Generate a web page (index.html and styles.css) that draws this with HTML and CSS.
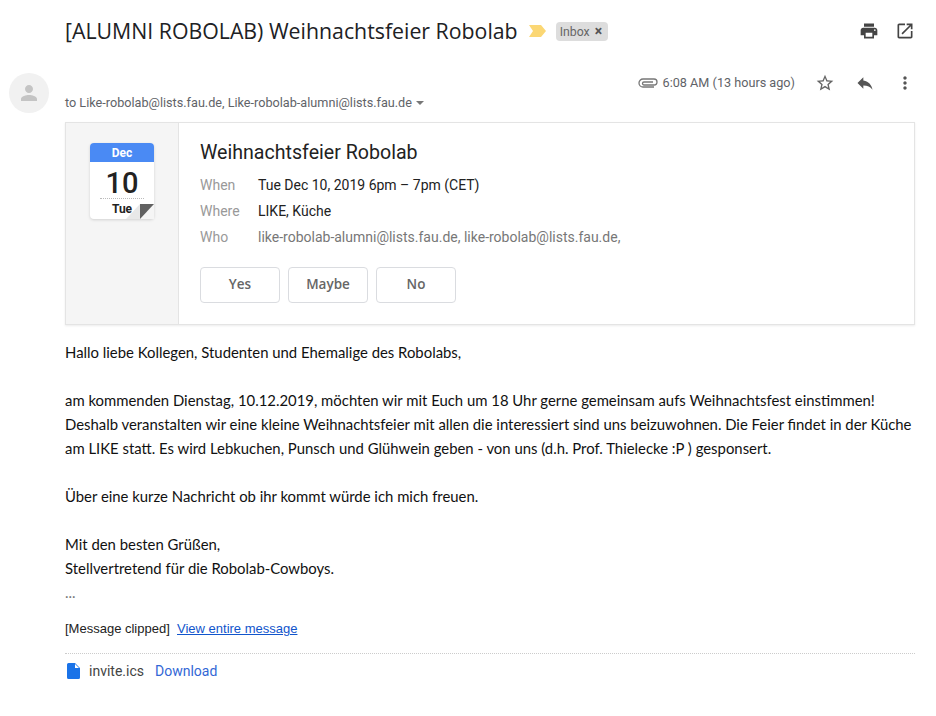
FILE: index.html
```html
<!DOCTYPE html>
<html>
<head>
    <title>Weihnachtsfeier Robolab</title>
    <link rel="stylesheet" href="styles.css">
</head>
<body>
    <div class="subject-row">
        <h1 class="subject">[ALUMNI ROBOLAB) Weihnachtsfeier Robolab</h1>
        <svg class="marker" viewBox="0 0 18 12"><path d="M0 0h12l5 6-5 6H0l4-6z" fill="#fbd774"/></svg>
        <span class="label">Inbox <span class="label-x">×</span></span>
        <div class="subject-icons">
            <svg class="icon" viewBox="0 0 24 24"><path d="M19 8H5c-1.66 0-3 1.34-3 3v6h4v4h12v-4h4v-6c0-1.66-1.34-3-3-3zm-3 11H8v-5h8v5zm3-7c-.55 0-1-.45-1-1s.45-1 1-1 1 .45 1 1-.45 1-1 1zm-1-9H6v4h12V3z" fill="#444"/></svg>
            <svg class="icon" viewBox="0 0 24 24"><path d="M19 19H5V5h7V3H5c-1.11 0-2 .9-2 2v14c0 1.1.89 2 2 2h14c1.1 0 2-.9 2-2v-7h-2v7zM14 3v2h3.59l-9.83 9.83 1.41 1.41L19 6.41V10h2V3h-7z" fill="#444"/></svg>
        </div>
    </div>

    <div class="message-head">
        <div class="avatar">
            <svg viewBox="0 0 24 24"><path d="M12 12c2.2 0 4-1.8 4-4s-1.800-4-4-4-4 1.800-4 4 1.800 4 4 4zm0 2c-2.700 0-8 1.300-8 4v2h16v-2c0-2.700-5.300-4-8-4z" fill="#c4c4c4"/></svg>
        </div>
        <div class="recipients">
            <span>to Like-robolab@lists.fau.de, Like-robolab-alumni@lists.fau.de</span>
            <span class="caret"></span>
        </div>
        <div class="message-meta">
            <svg class="clip" viewBox="0 0 20 10"><path d="M5 1h11a3 3 0 0 1 0 6H6a1.500 1.500 0 0 1 0-3h9" fill="none" stroke="#777" stroke-width="1.300"/><path d="M5 1a4 4 0 0 0 0 8h11" fill="none" stroke="#777" stroke-width="1.300"/></svg>
            <span class="time">6:08 AM (13 hours ago)</span>
            <svg class="icon star" viewBox="0 0 24 24"><path d="M22 9.240l-7.190-.62L12 2 9.190 8.630 2 9.240l5.460 4.730L5.820 21 12 17.270 18.180 21l-1.630-7.030L22 9.240zM12 15.400l-3.760 2.270 1-4.280-3.320-2.880 4.380-.38L12 6.100l1.710 4.040 4.380.38-3.320 2.880 1 4.280L12 15.400z" fill="#666"/></svg>
            <svg class="icon reply" viewBox="0 0 24 24"><path d="M10 9V5l-7 7 7 7v-4.100c5 0 8.500 1.600 11 5.100-1-5-4-10-11-11z" fill="#555"/></svg>
            <svg class="icon more" viewBox="0 0 24 24"><path d="M12 8c1.100 0 2-.9 2-2s-.9-2-2-2-2 .9-2 2 .9 2 2 2zm0 2c-1.100 0-2 .9-2 2s.9 2 2 2 2-.9 2-2-.9-2-2-2zm0 6c-1.100 0-2 .9-2 2s.9 2 2 2 2-.9 2-2-.9-2-2-2z" fill="#555"/></svg>
        </div>
    </div>

    <div class="content">
        <div class="invite">
            <div class="invite-date">
                <div class="calendar">
                    <div class="cal-month">Dec</div>
                    <div class="cal-day">10</div>
                    <div class="cal-weekday">Tue</div>
                    <svg class="cal-fold" viewBox="0 0 28 15"><path d="M14 15L28 15 28 0z" fill="#f5f5f5"/><path d="M14 0v15H0z" fill="#e8e8e8"/><path d="M14 0h14L14 15z" fill="#616161"/></svg>
                </div>
            </div>
            <div class="invite-info">
                <div class="invite-title">Weihnachtsfeier Robolab</div>
                <div class="info-row"><span class="info-label">When</span><span>Tue Dec 10, 2019 6pm – 7pm (CET)</span></div>
                <div class="info-row"><span class="info-label">Where</span><span>LIKE, Küche</span></div>
                <div class="info-row"><span class="info-label">Who</span><span class="info-muted">like-robolab-alumni@lists.fau.de, like-robolab@lists.fau.de,</span></div>
                <div class="rsvp">
                    <button>Yes</button>
                    <button>Maybe</button>
                    <button>No</button>
                </div>
            </div>
        </div>

        <div class="mail-text">
            <p>Hallo liebe Kollegen, Studenten und Ehemalige des Robolabs,</p>
            <p>&nbsp;</p>
            <p>am kommenden Dienstag, 10.12.2019, möchten wir mit Euch um 18 Uhr gerne gemeinsam aufs Weihnachtsfest einstimmen!</p>
            <p>Deshalb veranstalten wir eine kleine Weihnachtsfeier mit allen die interessiert sind uns beizuwohnen. Die Feier findet in der Küche</p>
            <p>am LIKE statt. Es wird Lebkuchen, Punsch und Glühwein geben - von uns (d.h. Prof. Thielecke :P ) gesponsert.</p>
            <p>&nbsp;</p>
            <p>Über eine kurze Nachricht ob ihr kommt würde ich mich freuen.</p>
            <p>&nbsp;</p>
            <p>Mit den besten Grüßen,</p>
            <p>Stellvertretend für die Robolab-Cowboys.</p>
            <p class="dots">...</p>
        </div>

        <div class="clipped">[Message clipped]&nbsp; <a href="#">View entire message</a></div>

        <div class="attachment">
            <svg class="file-icon" viewBox="0 0 13 16"><path d="M1.500 0H8l5 5v9.500a1.500 1.500 0 0 1-1.500 1.500h-10A1.500 1.500 0 0 1 0 14.500v-13A1.500 1.500 0 0 1 1.500 0z" fill="#1a73e8"/><path d="M8 1l4 4H8z" fill="white"/></svg>
            <span class="file-name">invite.ics</span>
            <a class="download" href="#">Download</a>
        </div>
    </div>
</body>
</html>
```

FILE: styles.css
```css
body {
    margin: 0;
    background-color: white;
    font-family: Roboto, Arial, sans-serif;
    color: #222;
}

/* Subject line */
.subject-row {
    display: flex;
    align-items: center;
    height: 62px;
    padding: 0 21px 0 65px;
}
.subject {
    margin: 0 0 2px;
    font-family: "Open Sans", Arial, sans-serif;
    font-size: 21.3px;
    font-weight: 400;
    color: #202124;
    white-space: nowrap;
}
.marker {
    width: 18px;
    height: 12px;
    margin-left: 11px;
}
.label {
    margin-left: 9px;
    padding: 0 6px 0 4px;
    background-color: #ddd;
    border-radius: 4px;
    font-size: 12.3px;
    line-height: 18px;
    color: #666;
}
.label-x {
    margin-left: 2px;
    font-size: 14px;
    font-weight: 700;
    color: #555;
}
.subject-icons {
    display: flex;
    gap: 16px;
    margin-left: auto;
}
.icon {
    width: 20px;
    height: 20px;
}

/* Message header */
.message-head {
    display: flex;
    height: 60px;
    position: relative;
}
.avatar {
    display: flex;
    align-items: center;
    justify-content: center;
    width: 40px;
    height: 40px;
    margin: 11px 0 0 9px;
    border-radius: 50%;
    background-color: #f1f1f1;
}
.avatar svg {
    width: 24px;
    height: 24px;
}
.recipients {
    margin: 33px 0 0 16px;
    font-size: 12.67px;
    line-height: 16px;
    color: #5f6368;
}
.caret {
    display: inline-block;
    margin-left: 1px;
    border: 4px solid transparent;
    border-top: 4px solid #777;
    border-bottom: none;
    vertical-align: 2px;
}
.message-meta {
    display: flex;
    align-items: center;
    position: absolute;
    top: 11px;
    right: 21px;
    height: 20px;
}
.clip {
    width: 20px;
    height: 10px;
    margin-right: 5px;
}
.time {
    margin-bottom: 1px;
    font-size: 12.67px;
    color: #5f6368;
}
.star {
    margin-left: 20px;
}
.reply {
    margin-left: 20px;
}
.more {
    margin-left: 20px;
}

.content {
    padding: 0 21px 0 65px;
}

/* Calendar invite */
.invite {
    display: flex;
    height: 201px;
    border: 1px solid #e4e4e4;
    box-shadow: 0 1px 2px rgba(0, 0, 0, 0.08);
}
.invite-date {
    width: 113px;
    padding: 20px 0 0 24px;
    box-sizing: border-box;
    background-color: #f5f5f5;
    border-right: 1px solid #e4e4e4;
}
.calendar {
    position: relative;
    width: 64px;
    height: 76px;
    background-color: white;
    border-radius: 4px;
    box-shadow: 0 1px 3px rgba(0, 0, 0, 0.15);
    text-align: center;
}
.cal-month {
    height: 19px;
    line-height: 20px;
    background-color: #4a8af4;
    border-radius: 4px 4px 0 0;
    font-size: 12px;
    font-weight: 700;
    color: white;
}
.cal-day {
    height: 36px;
    margin: 0 10px;
    border-bottom: 1px dotted #bbb;
    line-height: 42px;
    font-size: 29px;
    font-weight: 500;
    color: #222;
}
.cal-weekday {
    line-height: 21px;
    font-size: 12px;
    font-weight: 700;
    color: #222;
}
.cal-fold {
    position: absolute;
    right: 0;
    bottom: 0;
    width: 28px;
    height: 15px;
}
.invite-info {
    flex: 1;
    padding: 18px 0 0 21px;
}
.invite-title {
    margin-bottom: 7px;
    font-size: 19.6px;
    line-height: 24px;
    color: #222;
}
.info-row {
    display: flex;
    font-size: 14px;
    line-height: 26px;
}
.info-label {
    width: 58px;
    color: #999;
}
.info-muted {
    color: #777;
}
.rsvp {
    display: flex;
    gap: 8px;
    margin-top: 17px;
}
.rsvp button {
    width: 80px;
    height: 36px;
    padding: 0 0 2px;
    border: 1px solid #dadce0;
    border-radius: 4px;
    background-color: white;
    font-family: "Open Sans", Arial, sans-serif;
    font-size: 13.5px;
    font-weight: 600;
    color: #666;
}

/* Mail body */
.mail-text {
    margin-top: 15px;
    font-family: Lato, Arial, sans-serif;
    font-size: 14.88px;
    line-height: 24px;
    color: #111;
}
.mail-text p {
    margin: 0;
    white-space: nowrap;
}
.dots {
    color: #777;
}
.clipped {
    margin-top: 17px;
    font-family: "Liberation Sans", Arial, sans-serif;
    font-size: 13px;
    line-height: 16px;
    color: #222;
}
.clipped a {
    color: #15c;
}

.attachment {
    display: flex;
    align-items: center;
    height: 34px;
    margin-top: 16px;
    border-top: 1px dotted #ccc;
    font-size: 14px;
}
.file-icon {
    width: 13px;
    height: 16px;
    margin: 0 9px 0 2px;
}
.file-name {
    color: #444;
}
.download {
    margin-left: 11px;
    color: #3367d6;
    text-decoration: none;
}
```
